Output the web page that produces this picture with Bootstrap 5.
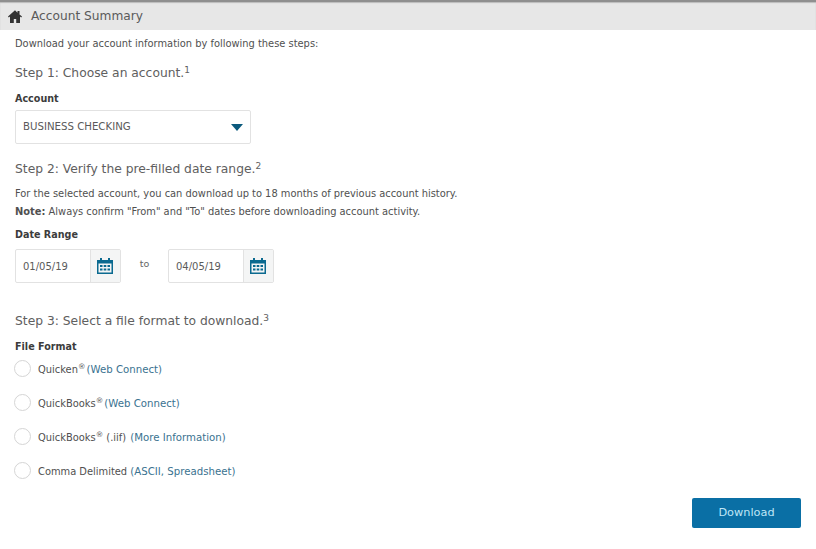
<!DOCTYPE html>
<html lang="en">
<head>
<meta charset="utf-8">
<title>Account Summary</title>
<link href="https://cdn.jsdelivr.net/npm/bootstrap@5.3.0/dist/css/bootstrap.min.css" rel="stylesheet">
<style>
body{font-family:"DejaVu Sans",sans-serif;font-size:9.9px;color:#505050;background:#fff;line-height:14px}
.top-head{height:30px;background:#e7e7e7;border-top:2px solid #8f8f8f;padding-left:8px;gap:9px;box-shadow:inset 0 1px 1px #bbb}
.top-head span{font-size:12.2px;color:#5a5a5a}
.wrap{padding:0 15px}
.intro{margin:7px 0 0;height:14px}
.step-title{font-size:12.3px;font-weight:400;color:#606060;margin:0;line-height:18px}
.step-title sup{font-size:9px;top:-.5em}
.step-one{margin-top:13px}
.step-two{margin-top:16px}
.step-three{margin-top:29px}
.fld-label{font-weight:700;font-size:9.6px;color:#3c3c3c;margin:0;line-height:14px;display:block}
.lbl-acct{margin-top:10px}
.lbl-date{margin-top:9px}
.lbl-file{margin-top:10px}
.acct-box{width:236px;height:34px;border:1px solid #e2e2e2;padding:0 7px;font-size:10.2px;color:#5a5a5a;border-radius:2px;margin-top:4px}
.caret-down{width:0;height:0;border-left:6px solid transparent;border-right:6px solid transparent;border-top:7px solid #0b5a7d}
.para-first{margin:9px 0 0}
.para-next{margin:4px 0 0}
.date-line{margin-top:7px}
.date-box{width:106px;height:34px;border:1px solid #e2e2e2;border-radius:2px}
.date-val{width:74px;padding:1px 0 0 7px;color:#5a5a5a;font-size:10px}
.cal-cell{flex:1;background:#f4f5f5;border-left:1px solid #e2e2e2;padding-right:2px}
.to-word{width:47px;text-align:center;color:#666;font-size:9.5px;padding-bottom:4px}
.radio-list{margin-top:-2px}
.radio-row{height:34px;gap:7px;margin-left:-1px}
.radio-dot{width:17px;height:17px;border:1px solid #d5d5d5;border-radius:50%;background:#fff;margin-top:-2px}
.radio-txt{padding-top:2px}
.radio-row a{color:#3a7290;text-decoration:none;font-size:10.2px}
.radio-row a.lnk-tight{margin-left:-2px}
.radio-row a.lnk-wide{margin-left:1px}
.radio-row sup{font-size:7.5px;top:-.5em}
.dl-btn{width:109px;height:30px;background:#0a6fa5;color:#bfe6f7;font-size:11.3px;border:0;border-radius:2px;padding:0}
.dl-row{padding-right:15px;margin-top:10px}
</style>
</head>
<body>
<div class="top-head d-flex align-items-center">
  <svg width="14" height="13" viewBox="0 0 14 13" aria-hidden="true"><path fill="#333" d="M7 .3 0 6.600l.8 1L2 6.600V13h3.800V9h2.400v4H12V6.600l1.200 1 .8-1-2.500-2.200V1H9.500v1.700z"/></svg>
  <span>Account Summary</span>
</div>
<main class="wrap">
  <p class="intro">Download your account information by following these steps:</p>
  <h2 class="step-title step-one">Step 1: Choose an account.<sup>1</sup></h2>
  <label class="fld-label lbl-acct">Account</label>
  <div class="acct-box d-flex align-items-center justify-content-between">
    <span>BUSINESS CHECKING</span><span class="caret-down"></span>
  </div>
  <h2 class="step-title step-two">Step 2: Verify the pre-filled date range.<sup>2</sup></h2>
  <p class="para-first">For the selected account, you can download up to 18 months of previous account history.</p>
  <p class="para-next"><strong>Note:</strong> Always confirm "From" and "To" dates before downloading account activity.</p>
  <label class="fld-label lbl-date">Date Range</label>
  <div class="date-line d-flex align-items-center">
    <div class="date-box d-flex">
      <div class="date-val d-flex align-items-center">01/05/19</div>
      <div class="cal-cell d-flex align-items-center justify-content-center">
        <svg width="16" height="16" viewBox="0 0 16 16" aria-hidden="true"><path fill="#0b6a90" d="M3 0h2v2h6V0h2v2h3v14H0V2h3zM1.500 5.500v9h13v-9z"/><path fill="#0b6a90" d="M3 7h2.500v2H3zm3.700 0h2.600v2H6.700zm3.800 0H13v2h-2.500zM3 10.500h2.500v2H3zm3.700 0h2.600v2H6.700zm3.800 0H13v2h-2.500z"/></svg>
      </div>
    </div>
    <div class="to-word">to</div>
    <div class="date-box d-flex">
      <div class="date-val d-flex align-items-center">04/05/19</div>
      <div class="cal-cell d-flex align-items-center justify-content-center">
        <svg width="16" height="16" viewBox="0 0 16 16" aria-hidden="true"><path fill="#0b6a90" d="M3 0h2v2h6V0h2v2h3v14H0V2h3zM1.500 5.500v9h13v-9z"/><path fill="#0b6a90" d="M3 7h2.500v2H3zm3.700 0h2.600v2H6.700zm3.800 0H13v2h-2.500zM3 10.500h2.500v2H3zm3.700 0h2.600v2H6.700zm3.800 0H13v2h-2.500z"/></svg>
      </div>
    </div>
  </div>
  <h2 class="step-title step-three">Step 3: Select a file format to download.<sup>3</sup></h2>
  <label class="fld-label lbl-file">File Format</label>
  <div class="radio-list">
    <div class="radio-row d-flex align-items-center"><span class="radio-dot"></span><span class="radio-txt">Quicken<sup>®</sup> <a class="lnk-tight" href="#">(Web Connect)</a></span></div>
    <div class="radio-row d-flex align-items-center"><span class="radio-dot"></span><span class="radio-txt">QuickBooks<sup>®</sup> <a class="lnk-tight" href="#">(Web Connect)</a></span></div>
    <div class="radio-row d-flex align-items-center"><span class="radio-dot"></span><span class="radio-txt">QuickBooks<sup>®</sup> (.iif) <a class="lnk-wide" href="#">(More Information)</a></span></div>
    <div class="radio-row d-flex align-items-center"><span class="radio-dot"></span><span class="radio-txt">Comma Delimited <a href="#">(ASCII, Spreadsheet)</a></span></div>
  </div>
</main>
<div class="dl-row d-flex justify-content-end"><button class="btn dl-btn" type="button">Download</button></div>
<script src="https://cdn.jsdelivr.net/npm/bootstrap@5.3.0/dist/js/bootstrap.bundle.min.js"></script>
</body>
</html>
